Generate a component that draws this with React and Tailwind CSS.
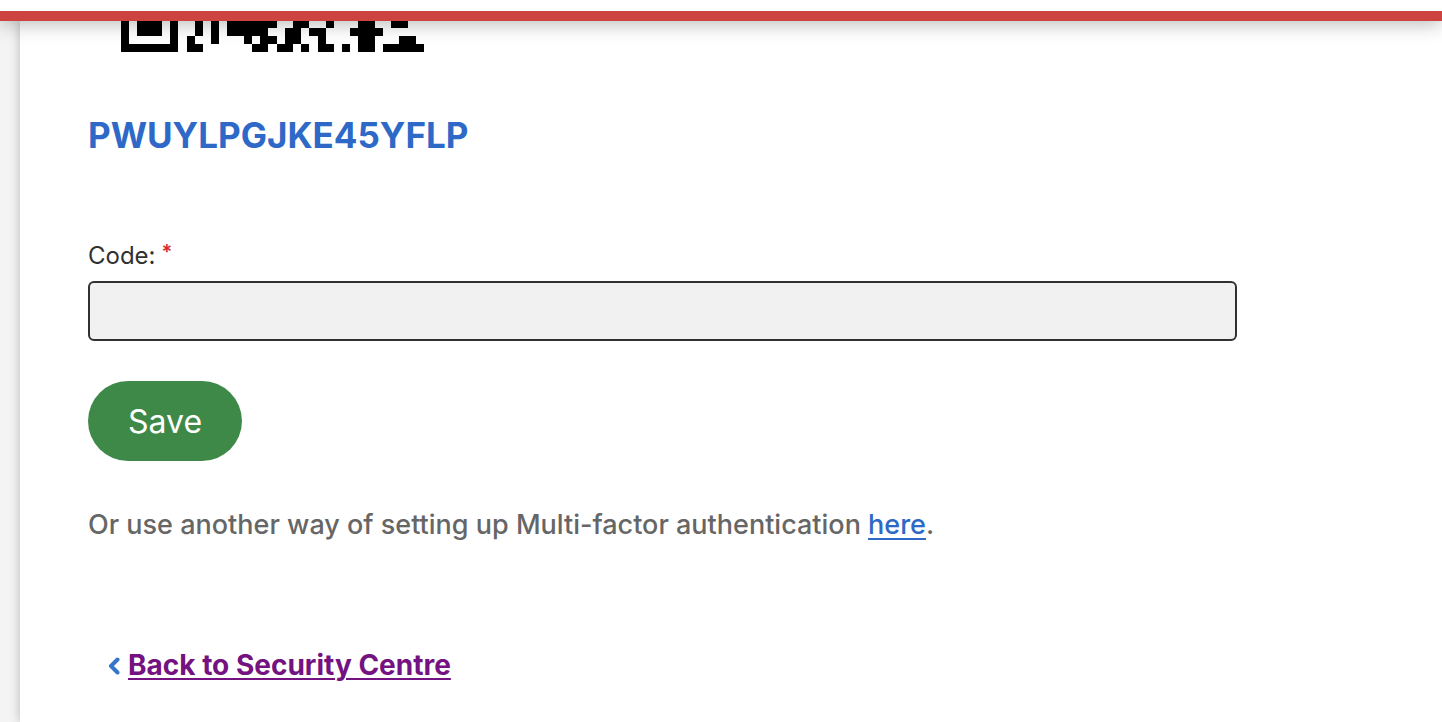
import React, { useState } from 'react';

// Visible rows of the QR code, as [first column, number of columns]
const qrRows = [
    [[0, 1], [2, 3], [6, 1], [9, 1], [11, 1], [13, 6], [21, 2], [25, 1], [29, 2], [33, 2]],
    [[0, 1], [2, 3], [6, 1], [9, 1], [11, 1], [13, 5], [20, 2], [23, 2], [28, 4]],
    [[0, 1], [6, 1], [8, 1], [11, 1], [15, 1], [17, 2], [20, 2], [24, 1], [29, 2], [34, 2]],
    [[0, 7], [8, 2], [16, 2], [19, 2], [22, 1], [24, 2], [27, 1], [29, 2], [32, 5]],
];

function QrCode() {
    return (
        <svg
            viewBox="0 0.2 37 3.8"
            preserveAspectRatio="none"
            shapeRendering="crispEdges"
            className="ml-[33px] h-[31px] w-[303px]"
            role="img"
            aria-label="QR code"
        >
            {qrRows.map((row, y) =>
                row.map(([x, width]) => <rect key={`${x}-${y}`} x={x} y={y} width={width} height={1} />)
            )}
        </svg>
    );
}

export default function App() {
    const [code, setCode] = useState('');

    return (
        <div className="flex min-h-screen flex-col bg-[#f4f4f4] font-['Inter',sans-serif]">
            <header className="z-10 h-[21px] border-b-10 border-[#cd4340] bg-white shadow-[0_2px_20px_rgba(0,0,0,0.3)]" />

            <main className="ml-5 flex-1 bg-white px-[68px] pb-8 shadow-[0_0_10px_rgba(0,0,0,0.25)]">
                <QrCode />

                <h2 className="mt-[59px] text-[35px] leading-12 font-bold text-[#2e69c7]">PWUYLPGJKE45YFLP</h2>

                <form className="mt-[81px]" onSubmit={(e) => e.preventDefault()}>
                    <label htmlFor="code" className="flex items-start gap-1.5 text-2xl leading-8 text-[#313132]">
                        Code:
                        <span className="text-xl leading-6 font-semibold text-[#d8292f]">*</span>
                    </label>
                    <input
                        id="code"
                        type="text"
                        required
                        value={code}
                        onChange={(e) => setCode(e.target.value)}
                        className="mt-[9px] block h-15 w-full max-w-[1149px] rounded-md border-2 border-[#313132] bg-[#f1f1f1] px-4 text-2xl outline-none"
                    />
                    <button type="submit" className="mt-10 h-20 rounded-full bg-[#3e8948] px-10 pt-0.5 text-[32px] font-normal text-white">
                        Save
                    </button>
                </form>

                <p className="mt-11 text-[27px] leading-10 font-medium text-[#666666]">
                    Or use another way of setting up Multi-factor authentication{' '}
                    <a href="#" className="text-[#2e69c7] underline decoration-2 underline-offset-4">here</a>.
                </p>

                <div className="mt-25 ml-5 flex items-center gap-2 text-[28px] leading-10 font-bold">
                    <svg viewBox="0 0 12 20" className="h-5 w-3" fill="none" stroke="#3576c8" strokeWidth="4" strokeLinecap="round" strokeLinejoin="round" aria-hidden="true">
                        <path d="M9.500 4.500 3 11l6.500 6.500" />
                    </svg>
                    <a href="#" className="text-[#731280] underline decoration-2 underline-offset-3">Back to Security Centre</a>
                </div>
            </main>
        </div>
    );
}
